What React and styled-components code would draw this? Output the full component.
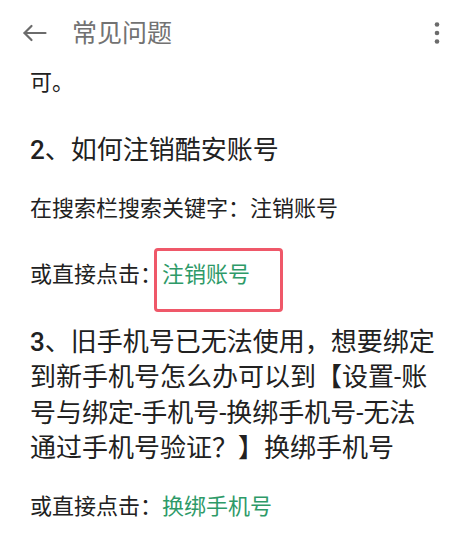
import styled, { createGlobalStyle } from "styled-components";

const Global = createGlobalStyle`
    html, body {
        margin: 0;
        padding: 0;
        background: #ffffff;
    }
    body {
        font-family: Roboto, "Noto Sans CJK SC", sans-serif;
        color: #212121;
    }
`

const Page = styled.div`
    width: 462px;
    min-height: 545px;
    background: #ffffff;
    overflow: hidden;
`

const Toolbar = styled.header`
    height: 66px;
    display: flex;
    align-items: center;
    padding: 0 20px 0 22px;
`

const IconBtn = styled.button`
    border: 0;
    background: transparent;
    padding: 0;
    display: flex;
    align-items: center;
    justify-content: center;
    color: #6b6b6b;
    cursor: pointer;
`

const Title = styled.h1`
    flex: 1;
    margin: 0 0 0 24px;
    font-size: 25px;
    font-weight: 400;
    color: #727272;
    line-height: 1;
`

const Content = styled.main`
    padding: 0 24px 20px 30px;
`

const Body = styled.p`
    margin: ${p => p.$gap ? "33px" : "0"} 0 0;
    font-size: 22px;
    line-height: 33px;
    position: relative;
`

const Heading = styled.h2`
    margin: 34px 0 23px;
    font-size: 26px;
    font-weight: 400;
    line-height: 35.5px;
`

const Num = styled.span`
    font-weight: 500;
`

const LinkText = styled.a`
    color: #2e9a68;
    text-decoration: none;
    position: relative;
`

const Highlight = styled.span`
    position: absolute;
    left: -8px;
    top: -14px;
    width: 129px;
    height: 64px;
    box-sizing: border-box;
    border: 3px solid #ef5869;
    border-radius: 4px;
    pointer-events: none;
`

const BackIcon = () => (
    <svg width="26" height="20" viewBox="0 0 26 20" fill="none" stroke="currentColor" strokeWidth="2.2" strokeLinecap="round" strokeLinejoin="round">
        <path d="M2.5 10H23.5" />
        <path d="M9.5 3L2.5 10L9.5 17" />
    </svg>
)

const MoreIcon = () => (
    <svg width="10" height="24" viewBox="0 0 10 24" fill="currentColor">
        <circle cx="5" cy="3.5" r="2.3" />
        <circle cx="5" cy="12" r="2.3" />
        <circle cx="5" cy="20.5" r="2.3" />
    </svg>
)

const App = () => {
    return (
        <>
            <Global />
            <Page>
                <Toolbar>
                    <IconBtn aria-label="返回"><BackIcon /></IconBtn>
                    <Title>常见问题</Title>
                    <IconBtn aria-label="更多"><MoreIcon /></IconBtn>
                </Toolbar>
                <Content>
                    <Body>可。</Body>
                    <Heading><Num>2</Num>、如何注销酷安账号</Heading>
                    <Body>在搜索栏搜索关键字：注销账号</Body>
                    <Body $gap>
                        或直接点击：<LinkText href="#">注销账号<Highlight /></LinkText>
                    </Body>
                    <Heading><Num>3</Num>、旧手机号已无法使用，想要绑定到新手机号怎么办可以到【设置-账号与绑定-手机号-换绑手机号-无法通过手机号验证？】换绑手机号</Heading>
                    <Body>或直接点击：<LinkText href="#">换绑手机号</LinkText></Body>
                </Content>
            </Page>
        </>
    )
}

export default App;
